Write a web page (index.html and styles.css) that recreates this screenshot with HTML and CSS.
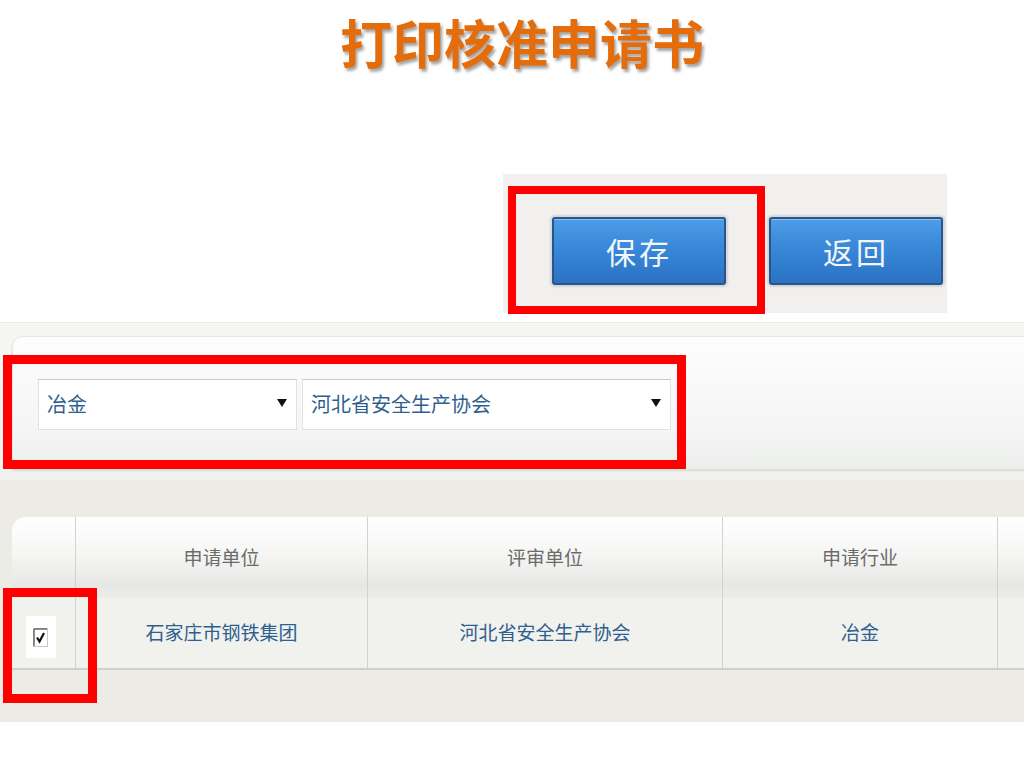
FILE: index.html
```html
<!DOCTYPE html>
<html lang="zh-CN">
<head>
    <meta charset="UTF-8">
    <meta name="viewport" content="width=device-width, initial-scale=1.0">
    <title>打印核准申请书</title>
    <link rel="stylesheet" href="styles.css">
</head>
<body>
    <h1 class="title">打印核准申请书</h1>

    <div class="toolbar">
        <button class="btn">保存</button>
        <button class="btn">返回</button>
        <div class="mark mark-save"></div>
    </div>

    <div class="filter">
        <div class="filter-panel">
            <div class="select select-trade">
                <span>冶金</span>
                <span class="arrow"></span>
            </div>
            <div class="select select-org">
                <span>河北省安全生产协会</span>
                <span class="arrow"></span>
            </div>
        </div>
        <div class="mark mark-filter"></div>
    </div>

    <div class="grid">
        <div class="grid-table">
            <div class="row head">
                <div class="cell check-col"></div>
                <div class="cell">申请单位</div>
                <div class="cell">评审单位</div>
                <div class="cell">申请行业</div>
                <div class="cell"></div>
            </div>
            <div class="row data">
                <div class="cell check-col">
                    <span class="checkbox">
                        <svg width="15" height="19" viewBox="0 0 15 19">
                            <rect x="0.5" y="0.5" width="14" height="18" fill="#fff" stroke="#c8c8c8"/>
                            <path d="M1 1 H14 M1 1 V18" stroke="#6a6a6a" stroke-width="1.5" fill="none"/>
                            <path d="M4 9.5 L6.5 13.5 L11 5" stroke="#111" stroke-width="2.2" fill="none"/>
                        </svg>
                    </span>
                </div>
                <div class="cell">石家庄市钢铁集团</div>
                <div class="cell">河北省安全生产协会</div>
                <div class="cell">冶金</div>
                <div class="cell"></div>
            </div>
        </div>
        <div class="mark mark-check"></div>
    </div>
</body>
</html>
```

FILE: styles.css
```css
:root {
    --red: #ff0000;
    --orange: #e46c0a;
    --panel: #f1f0ee;
    --grid-bg: #ecebe6;
    --line: #d2d2d0;
    --link: #2f5f8f;
}

body {
    margin: 0;
    background: #ffffff;
    font-family: "Noto Sans CJK SC", "Noto Sans", sans-serif;
    overflow: hidden;
}

.title {
    margin: 0;
    height: 90px;
    display: flex;
    align-items: center;
    justify-content: center;
    padding: 0 0 8px 20px;
    box-sizing: border-box;
    font-size: 52px;
    font-weight: bold;
    color: var(--orange);
    text-shadow: 2px 3px 3px rgba(90, 90, 90, 0.55);
}

.mark {
    position: absolute;
    border: 8px solid var(--red);
    box-sizing: border-box;
    pointer-events: none;
}

/* buttons */
.toolbar {
    position: relative;
    margin: 84px 0 0 503px;
    width: 444px;
    height: 139px;
    box-sizing: border-box;
    padding: 43px 0 0 49px;
    background: var(--panel);
    display: flex;
    align-items: flex-start;
    gap: 43px;
}

.btn {
    width: 174px;
    height: 68px;
    border: 2px solid #27558c;
    border-radius: 3px;
    background: linear-gradient(#4c9ce6, #3584d6 55%, #2c72c2);
    box-shadow: inset 0 1px 0 rgba(255, 255, 255, 0.35), 0 0 2px 2px #d4d4d4;
    color: #f2f6fb;
    font-family: "Noto Sans CJK SC", sans-serif;
    font-size: 30px;
    letter-spacing: 3px;
    padding: 0;
}

.mark-save {
    left: 5px;
    top: 12px;
    width: 257px;
    height: 128px;
}

/* filter panel */
.filter {
    position: relative;
    margin-top: 9px;
    height: 158px;
    box-sizing: border-box;
    padding: 13px 0 12px 12px;
    background: linear-gradient(#f6f6f5, #f1f1ef);
    border-top: 1px solid #ececea;
}

.filter-panel {
    height: 133px;
    box-sizing: border-box;
    padding: 42px 0 0 25px;
    border-top-left-radius: 10px;
    border-left: 1px solid #e4e4e2;
    border-top: 1px solid #e6e6e4;
    background: linear-gradient(#fdfdfd, #f4f5f4 70%, #eceeec);
    box-shadow: 0 2px 2px #d9dad8;
    display: flex;
    gap: 5px;
}

.select {
    height: 51px;
    box-sizing: border-box;
    display: flex;
    align-items: center;
    justify-content: space-between;
    padding: 0 9px 2px 8px;
    background: #ffffff;
    border: 1px solid #e2e2e2;
    border-top-color: #c9c9c9;
    font-size: 20px;
    color: var(--link);
}

.select-trade {
    width: 259px;
}

.select-org {
    width: 369px;
}

.arrow {
    width: 0;
    height: 0;
    border-left: 5px solid transparent;
    border-right: 5px solid transparent;
    border-top: 8px solid #111;
    margin-top: -2px;
}

.mark-filter {
    left: 3px;
    top: 32px;
    width: 683px;
    height: 114px;
    border-width: 9px;
}

/* grid */
.grid {
    position: relative;
    height: 242px;
    box-sizing: border-box;
    padding: 37px 0 0 12px;
    background: var(--grid-bg);
    overflow: hidden;
}

.grid-table {
    width: 1100px;
}

.row {
    display: grid;
    grid-template-columns: 63px 292px 355px 275px 115px;
}

.cell {
    display: flex;
    align-items: center;
    justify-content: center;
    border-left: 1px solid var(--line);
    font-size: 19px;
}

.cell:first-child {
    border-left: none;
}

.head {
    height: 81px;
}

.head .cell {
    padding-bottom: 2px;
    box-sizing: border-box;
    color: #6b6b6b;
    background: linear-gradient(#ffffff, #f6f6f5 45%, #e7e7e5 85%, #ececea);
}

.head .check-col {
    border-top-left-radius: 14px;
}

.data {
    height: 70px;
    border-bottom: 2px solid #cfcfcc;
}

.data .cell {
    background: #f1f1ee;
    color: var(--link);
    padding-bottom: 4px;
    box-sizing: border-box;
}

.checkbox {
    display: flex;
    align-items: center;
    justify-content: center;
    width: 30px;
    height: 42px;
    margin: 12px 0 0 -6px;
    background: #ffffff;
}

.mark-check {
    left: 3px;
    top: 108px;
    width: 94px;
    height: 115px;
    border-width: 9px;
}
```
